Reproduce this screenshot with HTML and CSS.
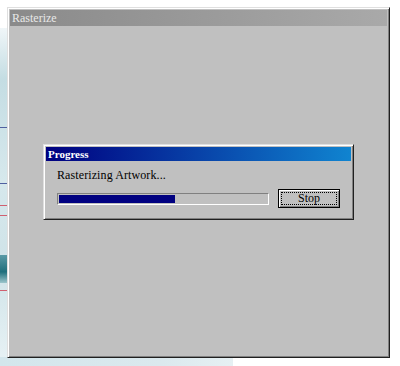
FILE: index.html
```html
<!DOCTYPE html>
<html>
<head>
<meta charset="utf-8">
<link rel="stylesheet" href="styles.css">
</head>
<body>
<div class="desktop">
  <div class="backdrop-left">
    <span class="line line-blue l1"></span>
    <span class="line line-blue l2"></span>
    <span class="line line-red l3"></span>
    <span class="line line-red l4"></span>
    <span class="blob"></span>
    <span class="line line-red l5"></span>
  </div>
  <div class="backdrop-bottom"></div>
  <div class="window">
    <div class="titlebar outer-title">Rasterize</div>
    <div class="window-body">
      <div class="dialog">
        <div class="titlebar dialog-title">Progress</div>
        <div class="dialog-body">
          <div class="label">Rasterizing Artwork...</div>
          <div class="row">
            <div class="progress"><div class="fill" style="width:56%"></div></div>
            <button class="btn"><span class="focus">Stop</span></button>
          </div>
        </div>
      </div>
    </div>
  </div>
</div>
</body>
</html>
```

FILE: styles.css
```css
* { box-sizing: border-box; }
html, body { margin: 0; padding: 0; background: #ffffff; }
body { width: 400px; height: 366px; overflow: hidden; font-family: "Liberation Serif", "Times New Roman", serif; }

.desktop { position: relative; width: 400px; height: 366px; padding: 7px 0 0 7px; }

.backdrop-left {
  position: absolute; left: 0; top: 28px; width: 8px; height: 338px;
  background: linear-gradient(180deg, #f0f6f8 0%, #c4dde3 15%, #d6e8ec 45%, #cfe3e8 70%, #e8f2f5 100%);
}
.line { position: absolute; left: 0; width: 8px; height: 1px; }
.line-blue { background: #5060a0; }
.line-red { background: #d06070; }
.l1 { top: 99px; }
.l2 { top: 155px; }
.l3 { top: 177px; }
.l4 { top: 187px; }
.l5 { top: 262px; }
.blob { position: absolute; left: 0; top: 227px; width: 8px; height: 28px; background: linear-gradient(180deg, #5a9aa6, #1f6f7c 60%, #9cc6cc); }

.backdrop-bottom {
  position: absolute; left: 0; top: 357px; width: 233px; height: 9px;
  background: linear-gradient(90deg, #d3e6ec, #dbe9ee 70%, #e6f0f3);
}

.window {
  position: relative;
  width: 383px; height: 351px;
  background: #c0c0c0;
  border-top: 1px solid #dfdfdf; border-left: 1px solid #dfdfdf;
  border-right: 1px solid #202020; border-bottom: 1px solid #202020;
  box-shadow: inset 1px 1px 0 #ffffff, inset -1px -1px 0 #808080;
  padding: 2px;
  display: flex; flex-direction: column;
}

.titlebar {
  height: 16px; line-height: 16px; font-size: 12px; padding-left: 2px;
  white-space: nowrap;
}
.outer-title {
  color: #e8e8e8;
  background: linear-gradient(90deg, #8a8a8a, #a9a9a9);
}

.window-body { flex: 1; padding: 118px 0 0 33px; }

.dialog {
  width: 311px; height: 76px;
  background: #c0c0c0;
  border-top: 1px solid #dfdfdf; border-left: 1px solid #dfdfdf;
  border-right: 1px solid #202020; border-bottom: 1px solid #202020;
  box-shadow: inset 1px 1px 0 #ffffff, inset -1px -1px 0 #808080;
  padding: 2px;
}
.dialog-title {
  height: 14px; line-height: 14px;
  color: #ffffff; font-weight: bold; font-size: 11px;
  background: linear-gradient(90deg, #000080, #1084d0);
}
.dialog-body { padding: 7px 0 0 11px; }
.label { font-size: 12px; line-height: 14px; color: #000; letter-spacing: 0.1px; }
.row { display: flex; align-items: center; margin-top: 7px; }
.progress {
  width: 212px; height: 12px;
  border-top: 1px solid #808080; border-left: 1px solid #808080;
  border-right: 1px solid #ffffff; border-bottom: 1px solid #ffffff;
  padding: 1px;
  background: #c0c0c0;
}
.fill { height: 100%; background: #000080; }

.btn {
  margin-left: 9px;
  width: 62px; height: 19px; padding: 2px;
  background: #c0c0c0;
  border: 1px solid #000;
  box-shadow: inset 1px 1px 0 #ffffff, inset -1px -1px 0 #808080;
  font-family: "Liberation Serif", "Times New Roman", serif; font-size: 12px; color: #000;
  display: flex;
}
.focus {
  flex: 1; border: 1px dotted #000; line-height: 11px;
  display: flex; align-items: center; justify-content: center;
}
```
